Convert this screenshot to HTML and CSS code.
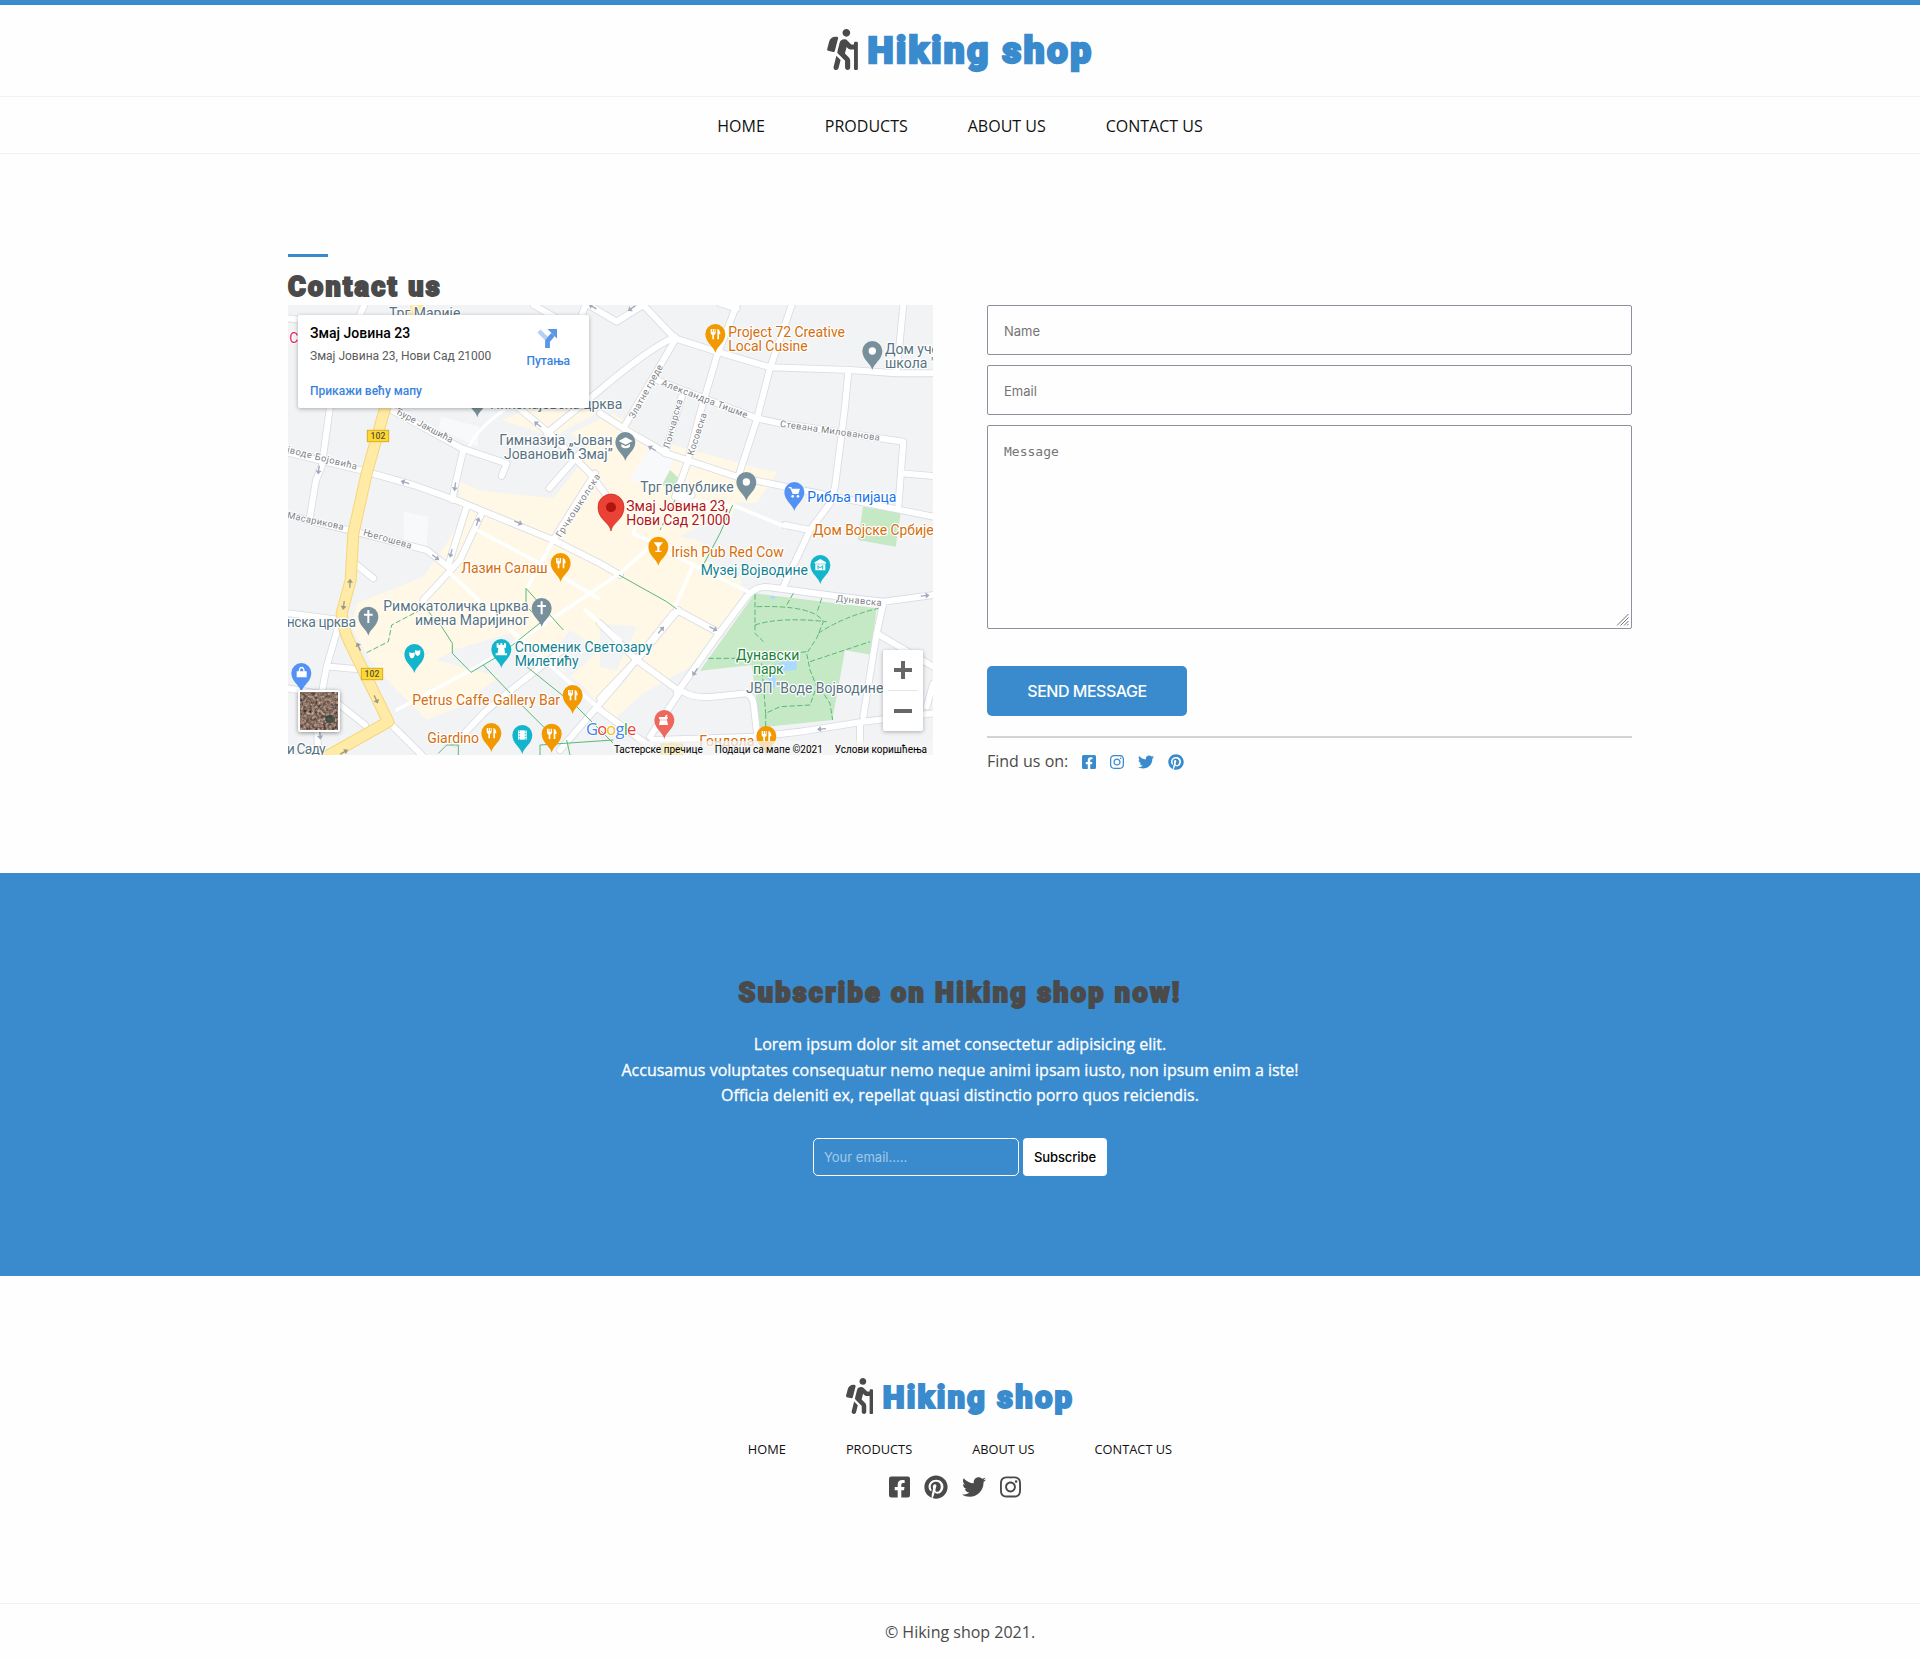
FILE: index.html
```html
<!DOCTYPE html>
<html lang="en">
<head>
<meta charset="utf-8">
<title>Hiking shop - Contact us</title>
<link rel="stylesheet" href="styles.css">
</head>
<body>
<svg class="sprite" width="0" height="0" aria-hidden="true">
  <symbol id="hiking" viewBox="0 0 384 512"><path d="M80.95 472.23c-4.28 17.16 6.14 34.53 23.28 38.81 2.61.66 5.22.95 7.8.95 14.33 0 27.37-9.7 31.02-24.23l25.24-100.97-52.78-52.78-34.56 138.22zm14.89-196.12L137 117c2.19-8.42-3.14-16.95-11.92-19.06-43.88-10.52-88.35 15.07-99.32 57.17L.49 253.24c-2.19 8.42 3.14 16.95 11.92 19.06l63.56 15.25c8.79 2.1 17.68-3.02 19.87-11.44zM368 160h-16c-8.84 0-16 7.16-16 16v16h-34.75l-46.78-46.78C243.38 134.11 228.61 128 212.91 128c-27.02 0-50.47 18.3-57.03 44.52l-26.92 107.72a32.012 32.012 0 0 0 8.42 30.39L224 397.25V480c0 17.67 14.33 32 32 32s32-14.33 32-32v-82.75c0-17.09-6.66-33.16-18.75-45.25l-46.82-46.82c.15-.5.49-.89.62-1.41l19.89-79.57 22.43 22.43c6 6 14.14 9.38 22.62 9.38h48v240c0 8.84 7.16 16 16 16h16c8.84 0 16-7.16 16-16V176c.01-8.84-7.15-16-15.99-16zM240 96c26.51 0 48-21.49 48-48S266.51 0 240 0s-48 21.49-48 48 21.49 48 48 48z"/></symbol>
  <symbol id="facebook" viewBox="0 0 448 512"><path d="M400 32H48A48 48 0 0 0 0 80v352a48 48 0 0 0 48 48h137.25V327.69h-63V256h63v-54.64c0-62.15 37-96.48 93.67-96.48 27.14 0 55.52 4.84 55.52 4.84v61h-31.27c-30.81 0-40.42 19.12-40.42 38.73V256h68.78l-11 71.69h-57.78V480H400a48 48 0 0 0 48-48V80a48 48 0 0 0-48-48z"/></symbol>
  <symbol id="instagram" viewBox="0 0 448 512"><path d="M224.1 141c-63.6 0-114.9 51.3-114.9 114.9s51.3 114.9 114.9 114.9S339 319.5 339 255.9 287.7 141 224.1 141zm0 189.6c-41.1 0-74.7-33.5-74.7-74.7s33.5-74.7 74.7-74.7 74.7 33.5 74.7 74.7-33.6 74.7-74.7 74.7zm146.4-194.3c0 14.9-12 26.8-26.8 26.8-14.9 0-26.8-12-26.8-26.8s12-26.8 26.8-26.8 26.8 12 26.8 26.8zm76.1 27.2c-1.7-35.9-9.9-67.7-36.2-93.9-26.2-26.2-58-34.4-93.9-36.2-37-2.1-147.9-2.1-184.9 0-35.8 1.7-67.6 9.9-93.9 36.1s-34.4 58-36.2 93.9c-2.1 37-2.1 147.9 0 184.9 1.7 35.9 9.9 67.7 36.2 93.9s58 34.4 93.9 36.2c37 2.1 147.9 2.1 184.9 0 35.9-1.7 67.7-9.9 93.9-36.2 26.2-26.2 34.4-58 36.2-93.9 2.1-37 2.1-147.8 0-184.8zM398.8 388c-7.8 19.6-22.9 34.7-42.6 42.6-29.5 11.7-99.5 9-132.1 9s-102.7 2.6-132.1-9c-19.6-7.8-34.7-22.9-42.6-42.6-11.7-29.5-9-99.5-9-132.1s-2.6-102.7 9-132.1c7.8-19.6 22.9-34.7 42.6-42.6 29.5-11.7 99.5-9 132.1-9s102.7-2.6 132.1 9c19.6 7.8 34.7 22.9 42.6 42.6 11.7 29.5 9 99.5 9 132.1s2.7 102.7-9 132.1z"/></symbol>
  <symbol id="twitter" viewBox="0 0 512 512"><path d="M459.37 151.716c.325 4.548.325 9.097.325 13.645 0 138.72-105.583 298.558-298.558 298.558-59.452 0-114.68-17.219-161.137-47.106 8.447.974 16.568 1.299 25.34 1.299 49.055 0 94.213-16.568 130.274-44.832-46.132-.975-84.792-31.188-98.112-72.772 6.498.974 12.995 1.624 19.818 1.624 9.421 0 18.843-1.3 27.614-3.573-48.081-9.747-84.143-51.98-84.143-102.985v-1.299c13.969 7.797 30.214 12.67 47.431 13.319-28.264-18.843-46.781-51.005-46.781-87.391 0-19.492 5.197-37.36 14.294-52.954 51.655 63.675 129.3 105.258 216.365 109.807-1.624-7.797-2.599-15.918-2.599-24.04 0-57.828 46.782-104.934 104.934-104.934 30.213 0 57.502 12.67 76.67 33.137 23.715-4.548 46.456-13.32 66.599-25.34-7.798 24.366-24.366 44.833-46.132 57.827 21.117-2.273 41.584-8.122 60.426-16.243-14.292 20.791-32.161 39.308-52.628 54.253z"/></symbol>
  <symbol id="pinterest" viewBox="0 0 496 512"><path d="M496 256c0 137-111 248-248 248-25.6 0-50.2-3.9-73.4-11.1 10.1-16.5 25.2-43.5 30.8-65 3-11.6 15.4-59 15.4-59 8.1 15.4 31.7 28.5 56.8 28.5 74.8 0 128.7-68.8 128.7-154.3 0-81.9-66.9-143.2-152.9-143.2-107 0-163.9 71.8-163.9 150.1 0 36.4 19.4 81.7 50.3 96.1 4.7 2.2 7.2 1.2 8.3-3.3.8-3.4 5-20.3 6.9-28.1.6-2.5.3-4.7-1.7-7.1-10.1-12.5-18.3-35.3-18.3-56.6 0-54.7 41.4-107.6 112-107.6 60.9 0 103.6 41.5 103.6 100.9 0 67.1-33.9 113.6-78 113.6-24.3 0-42.6-20.1-36.7-44.8 7-29.5 20.5-61.3 20.5-82.6 0-19-10.2-34.9-31.4-34.9-24.9 0-44.9 25.7-44.9 60.2 0 22 7.4 36.8 7.4 36.8s-24.5 103.8-29 123.2c-5 21.4-3 51.6-.9 71.2C65.4 450.9 0 361.1 0 256 0 119 111 8 248 8s248 111 248 248z"/></symbol>
</svg>

<header class="header">
  <a class="logo"><svg class="logo-icon"><use href="#hiking"/></svg><span class="logo-text">Hiking shop</span></a>
</header>
<nav class="nav">
  <a>HOME</a><a>PRODUCTS</a><a>ABOUT US</a><a>CONTACT US</a>
</nav>

<main class="contact">
  <h1 class="contact-title">Contact us</h1>
  <div class="contact-grid">
    <div class="map">
      <svg class="map-canvas" viewBox="24 195 1935 1350">
        <defs>
          <path id="pin" d="M0 57C-4 38-30 26-30 0A30 30 0 1 1 30 0C30 26 4 38 0 57Z"/>
          <path id="fork" d="M-14-15v12q0 5 5 6v13h5v-13q5-1 5-6v-12h-3v9h-2v-9h-3v9h-2v-9zM6-15q9 2 9 16h-4v15h-5z"/>
          <path id="cross" d="M-3-20h6v11h10v6h-10v22h-6v-22h-10v-6h10z"/>
          <path id="arrow" d="M-13-2H2V-9L14 0 2 9V2H-13Z"/>
          <g id="roads">
            <path d="M24 235L60 240M255 190L240 225M150 500L125 680 108 720 90 830M24 638L240 690 400 735 540 785 820 900 960 970 1020 1005M335 510L545 625 680 670 665 708M550 630L522 750 518 780M800 580L960 450Q1100 330 1185 290M700 490L820 590 930 700 975 760M808 745L900 640M760 195L840 240M925 195L1010 245 1090 195M918 190L900 240M820 900L945 700"/>
            <path d="M960 520L1030 565 1160 640 1370 710 1540 745 1960 830M1090 195L1185 295 1310 335 1470 382 1710 390 1850 400 1960 400M1185 300L1030 565M1370 195L1310 350 1260 520 1220 675 1185 770 1235 765M1535 195L1470 385 1430 540 1375 710M1870 195L1850 400M1130 420L1430 535 1500 550 1870 605 1855 800M1205 470L1155 640M1705 395L1695 500 1665 740 1650 790 1590 870 1510 1040M1865 700L1960 708M1320 190L1370 205"/>
            <path d="M1515 855L1590 870M1190 1360L1310 1190 1400 1070Q1430 1035 1470 1042L1680 1070 1810 1085 1960 1065M1810 1090L1790 1180 1750 1430M1790 1180L1960 1280M1190 1110L1320 1180M1195 1110L1070 1260 960 1375M960 1150L1070 1260 1200 1355 1110 1490M1210 1355Q1240 1375 1300 1370L1400 1360Q1420 1370 1422 1400L1432 1490M960 1410L1110 1520M1100 1550L1120 1500 1430 1490 1560 1475 1750 1445 1960 1420M1740 1450V1550M1960 1330L1940 1400"/>
            <path d="M24 826L225 875 440 930 510 985M560 800L505 975M605 820L540 960 430 1080M225 970L280 1015M24 1120L180 1140M175 1160L140 1280 110 1440 115 1550M150 1280L260 1290M24 1345L110 1360M180 1395L255 1455M525 1510L610 1420 680 1360 860 1220M840 1530L1020 1320 1180 1120M330 1450L430 1550"/>
          </g>
        </defs>
        <rect x="24" y="195" width="1935" height="1350" fill="#f1f3f4"/>
        <g fill="#fff8e6">
          <path d="M525 720L800 830 950 640 870 580 1000 520 1160 640 1490 695 1465 735 1370 780 1340 880 1270 960 1380 1010 1390 1080 1250 1270 1090 1360 1000 1440 900 1330 760 1230 540 1400 440 1440 340 1340 270 1260 215 1160 230 1090 430 1010 500 910 560 810Z"/>
          <path d="M390 195h42l-6 34h-42zM665 540l150-60 135 40-130 70zM540 745l280 30 110-140 110 60-60 270-440-160zM920 620l260-5 310 85-60 90-270-10-130 180-200-120zM370 1345l160-50 70 50-160 90z"/>
        </g>
        <g fill="#f8f9fb"><path d="M485 530l112 30-5 60-118-55zM370 815l75 15-5 95-68-15zM1110 620l75 30-40 90-95-20z"/></g>
        <g fill="#f1f3f4"><path d="M1200 890l120-70 60 30-50 100-80-50zM960 1150l110 10-60 130-50-10zM870 1170l90 60-90 80-60-60zM470 1260l220 60 60-60-60-80-170 50z"/></g>
        <path fill="#c5e8c5" d="M1425 1060L1790 1105 1772 1244 1695 1230 1657 1440 1440 1462 1415 1275 1260 1292ZM1749 800L1862 820 1847 920 1734 900ZM1170 690l26 25-20 30-30-10z"/>
        <path fill="#aadaff" d="M1480 1275l55-18h15v32l-70 7zM1462 1315l20-10 10 25-20 25zM1470 1068h15v9h-12z"/>
        <use href="#roads" class="road-case"/><use href="#roads" class="road"/>
        <g class="lane"><path d="M590 870L780 970 955 1075M820 900L740 1045M350 1410L610 1270 780 1160 1020 1000 1120 910 1060 880 1090 790M510 1000L670 1150 950 1400 1100 1510M915 1110L1020 1200M1240 975L1185 1100M1170 940L1415 1060M1190 775L1370 800 1515 860"/></g>
        <path d="M570 615Q590 565 700 490" class="thin"/>
        <path d="M412 195L315 505 260 700 220 880 212 1020 185 1120Q190 1170 210 1210L325 1445 130 1555M1175 1550v-25" class="hwy-case"/>
        <path d="M412 190L315 505 260 700 220 880 212 1020 185 1120Q190 1170 210 1210L325 1445 130 1555" class="hwy"/>
        <g class="walk"><path d="M445 1115L485 1160 517 1210V1240L573 1297 660 1245 785 1145M738 1045L850 1170M738 1045V1100L785 1140M610 1275L720 1390 810 1480M740 1280L890 1400 1000 1510M1017 1005L1160 1085 1190 1107M1358 795L1320 880 1270 975M780 1545V1515L1000 1500M860 1500L870 1545M475 1540L500 1515H535V1550"/>
        <path stroke-dasharray="16 7" d="M260 1238L325 1205 335 1155 430 1105M1425 1063V1180L1450 1205M1430 1100Q1600 1095 1630 1145L1610 1195 1580 1240 1590 1290 1610 1340 1590 1395 1500 1400 1457 1420V1460M1540 1060L1520 1095M1625 1075L1610 1120M1425 1155Q1500 1130 1640 1145M1615 1180Q1690 1130 1795 1105M1590 1265L1770 1205M1285 1255H1370M1445 1270L1457 1420M1620 1345L1650 1390 1658 1440M1540 1240L1580 1235M1185 780L1140 870"/></g>
        <g fill="#a1a9bd">
          <use href="#arrow" transform="translate(375 727) rotate(198)"/><use href="#arrow" transform="translate(525 740) rotate(98)"/><use href="#arrow" transform="translate(116 690) rotate(98)"/><use href="#arrow" transform="translate(773 553) rotate(218)"/><use href="#arrow" transform="translate(938 200) rotate(210)"/><use href="#arrow" transform="translate(1055 205) rotate(145)"/><use href="#arrow" transform="translate(1116 625) rotate(210)"/><use href="#arrow" transform="translate(715 848) rotate(22)"/><use href="#arrow" transform="translate(467 952) rotate(38)"/><use href="#arrow" transform="translate(513 940) rotate(105)"/><use href="#arrow" transform="translate(593 845) rotate(-72)"/><use href="#arrow" transform="translate(1143 1170) rotate(-50)"/><use href="#arrow" transform="translate(1300 1166) rotate(28)"/><use href="#arrow" transform="translate(1245 1296) rotate(125)"/><use href="#arrow" transform="translate(1625 1467) rotate(175)"/><use href="#arrow" transform="translate(1935 1067) rotate(-6)"/><use href="#arrow" transform="translate(120 1485) rotate(85)"/>
        </g>
        <g fill="#9a9a86"><use href="#arrow" transform="translate(210 1030) rotate(-88)"/><use href="#arrow" transform="translate(191 1096) rotate(98)"/><use href="#arrow" transform="translate(236 1220) rotate(-115)"/><use href="#arrow" transform="translate(288 1378) rotate(65)"/><use href="#arrow" transform="translate(192 1536) rotate(-28)"/></g>
        <g class="shield"><rect x="262" y="571" width="64" height="34"/><rect x="244" y="1285" width="64" height="34"/><rect x="1144" y="1512" width="64" height="34"/></g>
        <g class="shield-num"><text x="294" y="597">102</text><text x="276" y="1311">102</text></g>

        <g class="street">
          <text transform="translate(345 520) rotate(28)" textLength="190">Ђуре Јакшића</text>
          <text transform="translate(20 637) rotate(14)" textLength="215">јводе Бојовића</text>
          <text transform="translate(20 834) rotate(12)" textLength="173">Масарикова</text>
          <text transform="translate(248 885) rotate(16)" textLength="150">Његошева</text>
          <text transform="translate(842 894) rotate(-57)" textLength="220">Грчкошколска</text>
          <text transform="translate(1062 538) rotate(-61)" textLength="180">Златне греде</text>
          <text transform="translate(1142 436) rotate(21)" textLength="275">Александра Тишме</text>
          <text transform="translate(1168 628) rotate(-75)" textLength="152">Лончарска</text>
          <text transform="translate(1240 648) rotate(-72)" textLength="132">Косовска</text>
          <text transform="translate(1499 560) rotate(8)" textLength="302">Стевана Милованова</text>
          <text transform="translate(1668 1084) rotate(6)" textLength="137">Дунавска</text>
        </g>

        <g fill="#78909c"><use href="#pin" x="592" y="475"/><use href="#pin" x="1036" y="606"/><use href="#pin" x="1777" y="333"/><use href="#pin" x="1399" y="726"/><use href="#pin" x="265" y="1130"/><use href="#pin" x="785" y="1104"/></g>
        <g fill="#f29900"><use href="#pin" x="1306" y="282"/><use href="#pin" x="842" y="969"/><use href="#pin" x="1135" y="920"/><use href="#pin" x="878" y="1365"/><use href="#pin" x="634" y="1479"/><use href="#pin" x="815" y="1481"/><use href="#pin" x="1459" y="1488"/></g>
        <g fill="#12b5cb"><use href="#pin" x="403" y="1242"/><use href="#pin" x="664" y="1227"/><use href="#pin" x="727" y="1485"/><use href="#pin" x="1621" y="975"/></g>
        <g fill="#5491f5"><use href="#pin" x="1543" y="756"/><use href="#pin" x="64" y="1299"/></g>
        <use href="#pin" x="1153" y="1440" fill="#ee675c"/>
        <g fill="#fff">
          <circle cx="1777" cy="333" r="11"/><circle cx="1399" cy="726" r="11"/>
          <use href="#cross" x="265" y="1130"/><use href="#cross" x="785" y="1104"/>
          <use href="#fork" x="1306" y="282"/><use href="#fork" x="842" y="969"/><use href="#fork" x="878" y="1365"/><use href="#fork" x="634" y="1479"/><use href="#fork" x="815" y="1481"/><use href="#fork" x="1459" y="1488"/>
          <path d="M1016 603l21-11 21 11-21 11zM1024 612v8q13 10 26 0v-8l-13 7z"/>
          <path d="M1121 907h28l-11 14v11h6v4h-18v-4h6v-11z"/>
          <path d="M1526 741h8l2 5h24l-5 16h-17l-7-17h-5z"/><circle cx="1538" cy="769" r="4"/><circle cx="1554" cy="769" r="4"/>
          <path d="M50 1294h30v18H50zM56 1294q0-14 9-14t9 14h-4q0-9-5-9t-5 9z"/>
          <path d="M388 1237q9 4 16 0v9q-2 9-8 9t-8-9zM405 1230q9 4 16 0v9q-2 9-8 9t-8-9z"/>
          <path d="M650 1210h6v5h5v-5h6v5h5v-5h6v13h-5l2 17h6v6h-34v-6h6l2-17h-5z"/>
          <path d="M714 1471h26v28h-26z"/>
          <path d="M1621 957l17 10v4h-34v-4zM1606 973h30v18h-30z"/>
          <path d="M1136 1431h28l-3 8h-22zM1140 1441h21l3 14h-27zM1158 1424l5 2-5 8-4-2z"/>
        </g>
        <path d="M1614 988v-11l7 7 7-7v11" fill="none" stroke="#12b5cb" stroke-width="3"/>
        <path d="M718 1471v28M736 1471v28" stroke="#12b5cb" stroke-width="3" stroke-dasharray="4 4"/>
        <path d="M993 873C989 846 954 840 954 801A39 39 0 1 1 1032 801C1032 840 997 846 993 873Z" fill="#ea4335" stroke="#c5221f" stroke-width="2"/>
        <circle cx="993" cy="802" r="15" fill="#b31412"/>

        <g class="poi slate">
          <text x="327" y="235" textLength="214">Трг Марије</text>
          <text x="630" y="507" textLength="397">Николајевска црква</text>
          <text x="658" y="616" textLength="340">Гимназија „Јован</text><text x="672" y="657" textLength="326">Јовановић Змај”</text>
          <text x="1815" y="342">Дом учени</text><text x="1815" y="384">школа "</text>
          <text x="1081" y="756" textLength="280">Трг републике</text>
          <text x="310" y="1114" textLength="436">Римокатоличка црква</text><text x="405" y="1156" textLength="341">имена Маријиног</text>
          <text x="20" y="1161" textLength="208">нска црква</text>
          <text x="20" y="1541" textLength="117">и Саду</text>
          <text x="1398" y="1360" textLength="412">ЈВП "Воде Војводине</text>
        </g>
        <g class="poi orange">
          <text x="1345" y="291" textLength="350">Project 72 Creative</text><text x="1345" y="333" textLength="238">Local Cusine</text>
          <text x="1599" y="885" textLength="362">Дом Војске Србије</text>
          <text x="1174" y="950" textLength="337">Irish Pub Red Cow</text>
          <text x="544" y="999" textLength="259">Лазин Салаш</text>
          <text x="397" y="1394" textLength="443">Petrus Caffe Gallery Bar</text>
          <text x="442" y="1509" textLength="155">Giardino</text>
          <text x="1258" y="1518" textLength="165">Гондола</text>
        </g>
        <g class="poi teal">
          <text x="704" y="1237" textLength="412">Споменик Светозару</text><text x="704" y="1279" textLength="192">Милетићу</text>
          <text x="1262" y="1005" textLength="322">Музеј Војводине</text>
        </g>
        <g class="poi red"><text x="1039" y="813" textLength="305">Змај Јовина 23,</text><text x="1039" y="855" textLength="312">Нови Сад 21000</text></g>
        <g class="poi green"><text x="1368" y="1260" textLength="190">Дунавски</text><text x="1419" y="1302" textLength="92">парк</text></g>
        <text class="poi blue" x="1582" y="785" textLength="267">Рибља пијаца</text>
        <text class="poi pink" x="28" y="309">С</text>
      </svg>

      <div class="place-card">
        <div class="place-info">
          <strong class="place-name">Змај Јовина 23</strong>
          <span class="place-address">Змај Јовина 23, Нови Сад 21000</span>
          <a class="place-link">Прикажи већу мапу</a>
        </div>
        <a class="place-route">
          <svg width="22" height="22" viewBox="0 0 22 22"><path d="M2 4L9.500 11.500" stroke="#b4d0f7" stroke-width="4.500"/><path d="M10.500 21V14L16 7.500" fill="none" stroke="#5b97e7" stroke-width="4.800"/><path d="M10.500 2H20V11.500Z" fill="#5b97e7"/></svg>
          <span>Путања</span>
        </a>
      </div>
      <svg class="satellite" width="42" height="42" viewBox="0 0 42 42">
        <defs><filter id="terrain" x="0" y="0" width="1" height="1" color-interpolation-filters="sRGB"><feTurbulence type="fractalNoise" baseFrequency=".35" numOctaves="3" seed="8"/><feColorMatrix values=".8 .3 0 0 -.02  .6 .4 0 0 -.06  .5 .4 0 0 -.06  0 0 0 0 1"/></filter></defs>
        <rect width="42" height="42" rx="2" fill="#fff"/><rect x="2" y="2" width="38" height="38" filter="url(#terrain)"/><ellipse cx="32" cy="29" rx="5" ry="4" fill="#36463c" opacity=".8"/>
      </svg>
      <div class="zoom-control"><span class="zoom-in"></span><span class="zoom-line"></span><span class="zoom-out"></span></div>
      <div class="google"><span class="g-blue">G</span><span class="g-red">o</span><span class="g-yellow">o</span><span class="g-blue">g</span><span class="g-green">l</span><span class="g-red">e</span></div>
      <div class="map-legal"><span>Тастерске пречице</span><span>Подаци са мапе ©2021</span><span>Услови коришћења</span></div>
    </div>

    <div class="form-side">
      <form class="form">
        <input class="field" type="text" placeholder="Name">
        <input class="field" type="email" placeholder="Email">
        <div class="message-wrap">
          <textarea class="field message" placeholder="Message"></textarea>
          <svg class="grip" width="13" height="13" viewBox="0 0 13 13"><path d="M1 12.500L12.500 1M4.500 12.500L12.500 4.500M8 12.500L12.500 8M11 12.500L12.500 11"/></svg>
        </div>
        <button class="send" type="button">SEND MESSAGE</button>
      </form>
      <div class="social">
        <span class="social-label">Find us on:</span>
        <svg class="s14"><use href="#facebook"/></svg><svg class="s14"><use href="#instagram"/></svg><svg class="s16"><use href="#twitter"/></svg><svg class="s16"><use href="#pinterest"/></svg>
      </div>
    </div>
  </div>
</main>

<section class="subscribe">
  <h2 class="subscribe-title">Subscribe on Hiking shop now!</h2>
  <p class="subscribe-text">Lorem ipsum dolor sit amet consectetur adipisicing elit.<br>Accusamus voluptates consequatur nemo neque animi ipsam iusto, non ipsum enim a iste!<br>Officia deleniti ex, repellat quasi distinctio porro quos reiciendis.</p>
  <form class="subscribe-form">
    <input class="subscribe-input" type="email" placeholder="Your email.....">
    <button class="subscribe-button" type="button">Subscribe</button>
  </form>
</section>

<footer class="footer">
  <a class="logo logo-small"><svg class="logo-icon"><use href="#hiking"/></svg><span class="logo-text">Hiking shop</span></a>
  <nav class="footer-nav"><a>HOME</a><a>PRODUCTS</a><a>ABOUT US</a><a>CONTACT US</a></nav>
  <div class="footer-social"><svg class="s21"><use href="#facebook"/></svg><svg class="s24"><use href="#pinterest"/></svg><svg class="s24"><use href="#twitter"/></svg><svg class="s21"><use href="#instagram"/></svg></div>
</footer>
<div class="copyright">© Hiking shop 2021.</div>
</body>
</html>
```
FILE: styles.css
```css
* { box-sizing: border-box; margin: 0; padding: 0; }
body { font: 16px/1.6 "Open Sans", sans-serif; color: #4a4a4a; background: #fefefe; }
.sprite { display: block; height: 0; }

.header { height: 97px; border-top: 5px solid #3a8bcd; border-bottom: 1px solid #f2f2f2; display: flex; justify-content: center; padding-top: 24px; }
.logo { display: flex; align-items: flex-start; }
.logo-icon { width: 31px; height: 41px; fill: #4a4a4a; }
.logo-text { font: 900 37px/40px Roboto, sans-serif; color: #3a8bcd; -webkit-text-stroke: 2.400px #3a8bcd; letter-spacing: 2.400px; margin: 2px 0 0 10px; white-space: nowrap; }
.nav { height: 57px; border-bottom: 1px solid #f2f2f2; display: flex; justify-content: center; align-items: center; gap: 60px; color: #111; padding-top: 3px; }

.contact { width: 1344px; margin: 0 auto; padding-top: 100px; height: 719px; }
.contact-title { font: 900 27px/30px Roboto, sans-serif; -webkit-text-stroke: 1.900px #4a4a4a; letter-spacing: 2.300px; height: 51px; }
.contact-title::before { content: ""; display: block; width: 40px; height: 3px; background: #3a8bcd; margin-bottom: 15px; }
.contact-grid { display: grid; grid-template-columns: 645px 645px; gap: 54px; }

.map { position: relative; height: 450px; overflow: hidden; font-family: Roboto, sans-serif; }
.map-canvas { display: block; width: 645px; height: 450px; }
.road-case, .road, .lane, .thin, .walk, .hwy, .hwy-case { fill: none; stroke-linejoin: round; stroke-linecap: round; }
.road-case { stroke: #d9dce3; stroke-width: 23px; }
.road { stroke: #fff; stroke-width: 18px; }
.lane { stroke: #fff; stroke-width: 11px; }
.thin { stroke: #fff; stroke-width: 9px; }
.walk { stroke: #5bb974; stroke-width: 3px; stroke-linecap: butt; }
.hwy-case { stroke: #f5d67b; stroke-width: 36px; }
.hwy { stroke: #ffeba5; stroke-width: 30px; }
.shield { fill: #fdd835; stroke: #d9ae20; stroke-width: 3px; }
.shield-num { font-size: 26px; fill: #5c5236; text-anchor: middle; font-weight: 500; }
.street { font-size: 28px; fill: #7c8086; stroke: #fff; stroke-width: 6px; paint-order: stroke; }
.poi { font-size: 42px; stroke: #fff; stroke-width: 7px; stroke-linejoin: round; paint-order: stroke; }
.slate { fill: #587381; }
.orange { fill: #d56e0c; }
.teal { fill: #128391; }
.red { fill: #b31412; }
.green { fill: #188038; }
.blue { fill: #1a73e8; }
.pink { fill: #e91e63; }

.place-card { position: absolute; left: 10px; top: 10px; width: 291px; height: 93px; background: #fff; border-radius: 2px; box-shadow: 0 1px 4px rgba(0,0,0,.3); display: flex; justify-content: space-between; padding: 9px 19px 0 12px; line-height: 16px; white-space: nowrap; }
.place-info { display: flex; flex-direction: column; }
.place-name { font-size: 14px; line-height: 18px; font-weight: 500; color: #000; }
.place-address { font-size: 12px; color: #5b5b5b; margin-top: 6px; }
.place-link, .place-route { font-size: 12px; color: #3a84df; font-weight: 500; }
.place-link { margin-top: 19px; }
.place-route { display: flex; flex-direction: column; align-items: center; gap: 4px; padding-top: 3px; }
.satellite { position: absolute; left: 10px; top: 385px; filter: drop-shadow(0 1px 2px rgba(0,0,0,.4)); }
.zoom-control { position: absolute; left: 595px; top: 345px; width: 40px; height: 81px; background: #fff; border-radius: 2px; box-shadow: 0 1px 4px rgba(0,0,0,.3); display: flex; flex-direction: column; align-items: center; }
.zoom-in { width: 18px; height: 18px; margin-top: 11px; background: linear-gradient(#666, #666) center/18px 4px no-repeat, linear-gradient(#666, #666) center/4px 18px no-repeat; }
.zoom-line { width: 30px; height: 1px; background: #e6e6e6; margin-top: 11px; }
.zoom-out { width: 18px; height: 4px; background: #666; margin-top: 18px; }
.google { position: absolute; left: 298px; top: 414px; font: 500 16.500px/20px "Open Sans", sans-serif; -webkit-text-stroke: 2px #fff; paint-order: stroke; letter-spacing: -.800px; }
.g-blue { color: #4285f4; }
.g-red { color: #ea4335; }
.g-yellow { color: #fbbc05; }
.g-green { color: #34a853; }
.map-legal { position: absolute; right: 0; bottom: 0; width: 320px; height: 14px; background: rgba(245,245,245,.75); display: flex; justify-content: flex-end; gap: 12px; padding-right: 6px; font-size: 10px; line-height: 17px; color: #000; white-space: nowrap; }

.form { display: flex; flex-direction: column; gap: 10px; }
.field { display: block; width: 645px; height: 50px; border: 1px solid #8f8f9d; border-radius: 2px; background: #fefefe; padding: 1px 16px 0; font: 13px Inter, sans-serif; outline: 0; }
.field::placeholder { color: #757575; }
.message-wrap { position: relative; }
.message { height: 204px; padding: 18px 16px; font: 13px "DejaVu Sans Mono", monospace; resize: none; }
.grip { position: absolute; right: 3px; bottom: 3px; fill: none; stroke: #777; stroke-width: 1px; }
.send { width: 200px; height: 50px; margin-top: 27px; border: 0; border-radius: 5px; background: #3a8bcd; color: #fff; font: 500 16px Inter, sans-serif; letter-spacing: -.480px; }
.social { display: flex; align-items: center; margin-top: 20px; border-top: 2px solid #d3d3d3; padding-top: 11px; }
.social-label { margin-right: 14px; }
.social svg { height: 16px; fill: #3a8bcd; margin-right: 14px; }
.s14 { width: 14px; }
.s16 { width: 16px; }

.subscribe { height: 403px; background: #3a8bcd; display: flex; flex-direction: column; align-items: center; padding-top: 105px; }
.subscribe-title { font: 900 27px/30px Roboto, sans-serif; -webkit-text-stroke: 1.900px #4a4a4a; letter-spacing: 2.300px; white-space: nowrap; }
.subscribe-text { color: #fff; -webkit-text-stroke: .300px #fff; line-height: 25.600px; text-align: center; margin: 24px 0 29px; }
.subscribe-form { display: flex; gap: 4px; }
.subscribe-input { width: 206px; height: 38px; border: 1px solid #fff; border-radius: 5px; background: transparent; padding: 0 10px; font: 13px Inter, sans-serif; }
.subscribe-input::placeholder { color: #a3c9e9; }
.subscribe-button { width: 84px; height: 38px; border: 0; border-radius: 4px; background: #fff; color: #000; font: 500 13px Inter, sans-serif; letter-spacing: -.1px; }

.footer { height: 327px; display: flex; flex-direction: column; align-items: center; padding-top: 102px; }
.logo-small .logo-icon { width: 27px; height: 36px; }
.logo-small .logo-text { font-size: 31px; line-height: 34px; letter-spacing: 2.200px; margin: 3px 0 0 10px; -webkit-text-stroke-width: 2px; }
.footer-nav { display: flex; gap: 60px; font-size: 12.800px; line-height: 20px; color: #111; margin-top: 24px; }
.footer-social { display: flex; gap: 14px; margin: 16px 10px 0 0; }
.footer-social svg { height: 24px; fill: #4a4a4a; }
.s21 { width: 21px; }
.s24 { width: 24px; }
.copyright { height: 56px; border-top: 1px solid #f2f2f2; text-align: center; padding-top: 16px; }
```
